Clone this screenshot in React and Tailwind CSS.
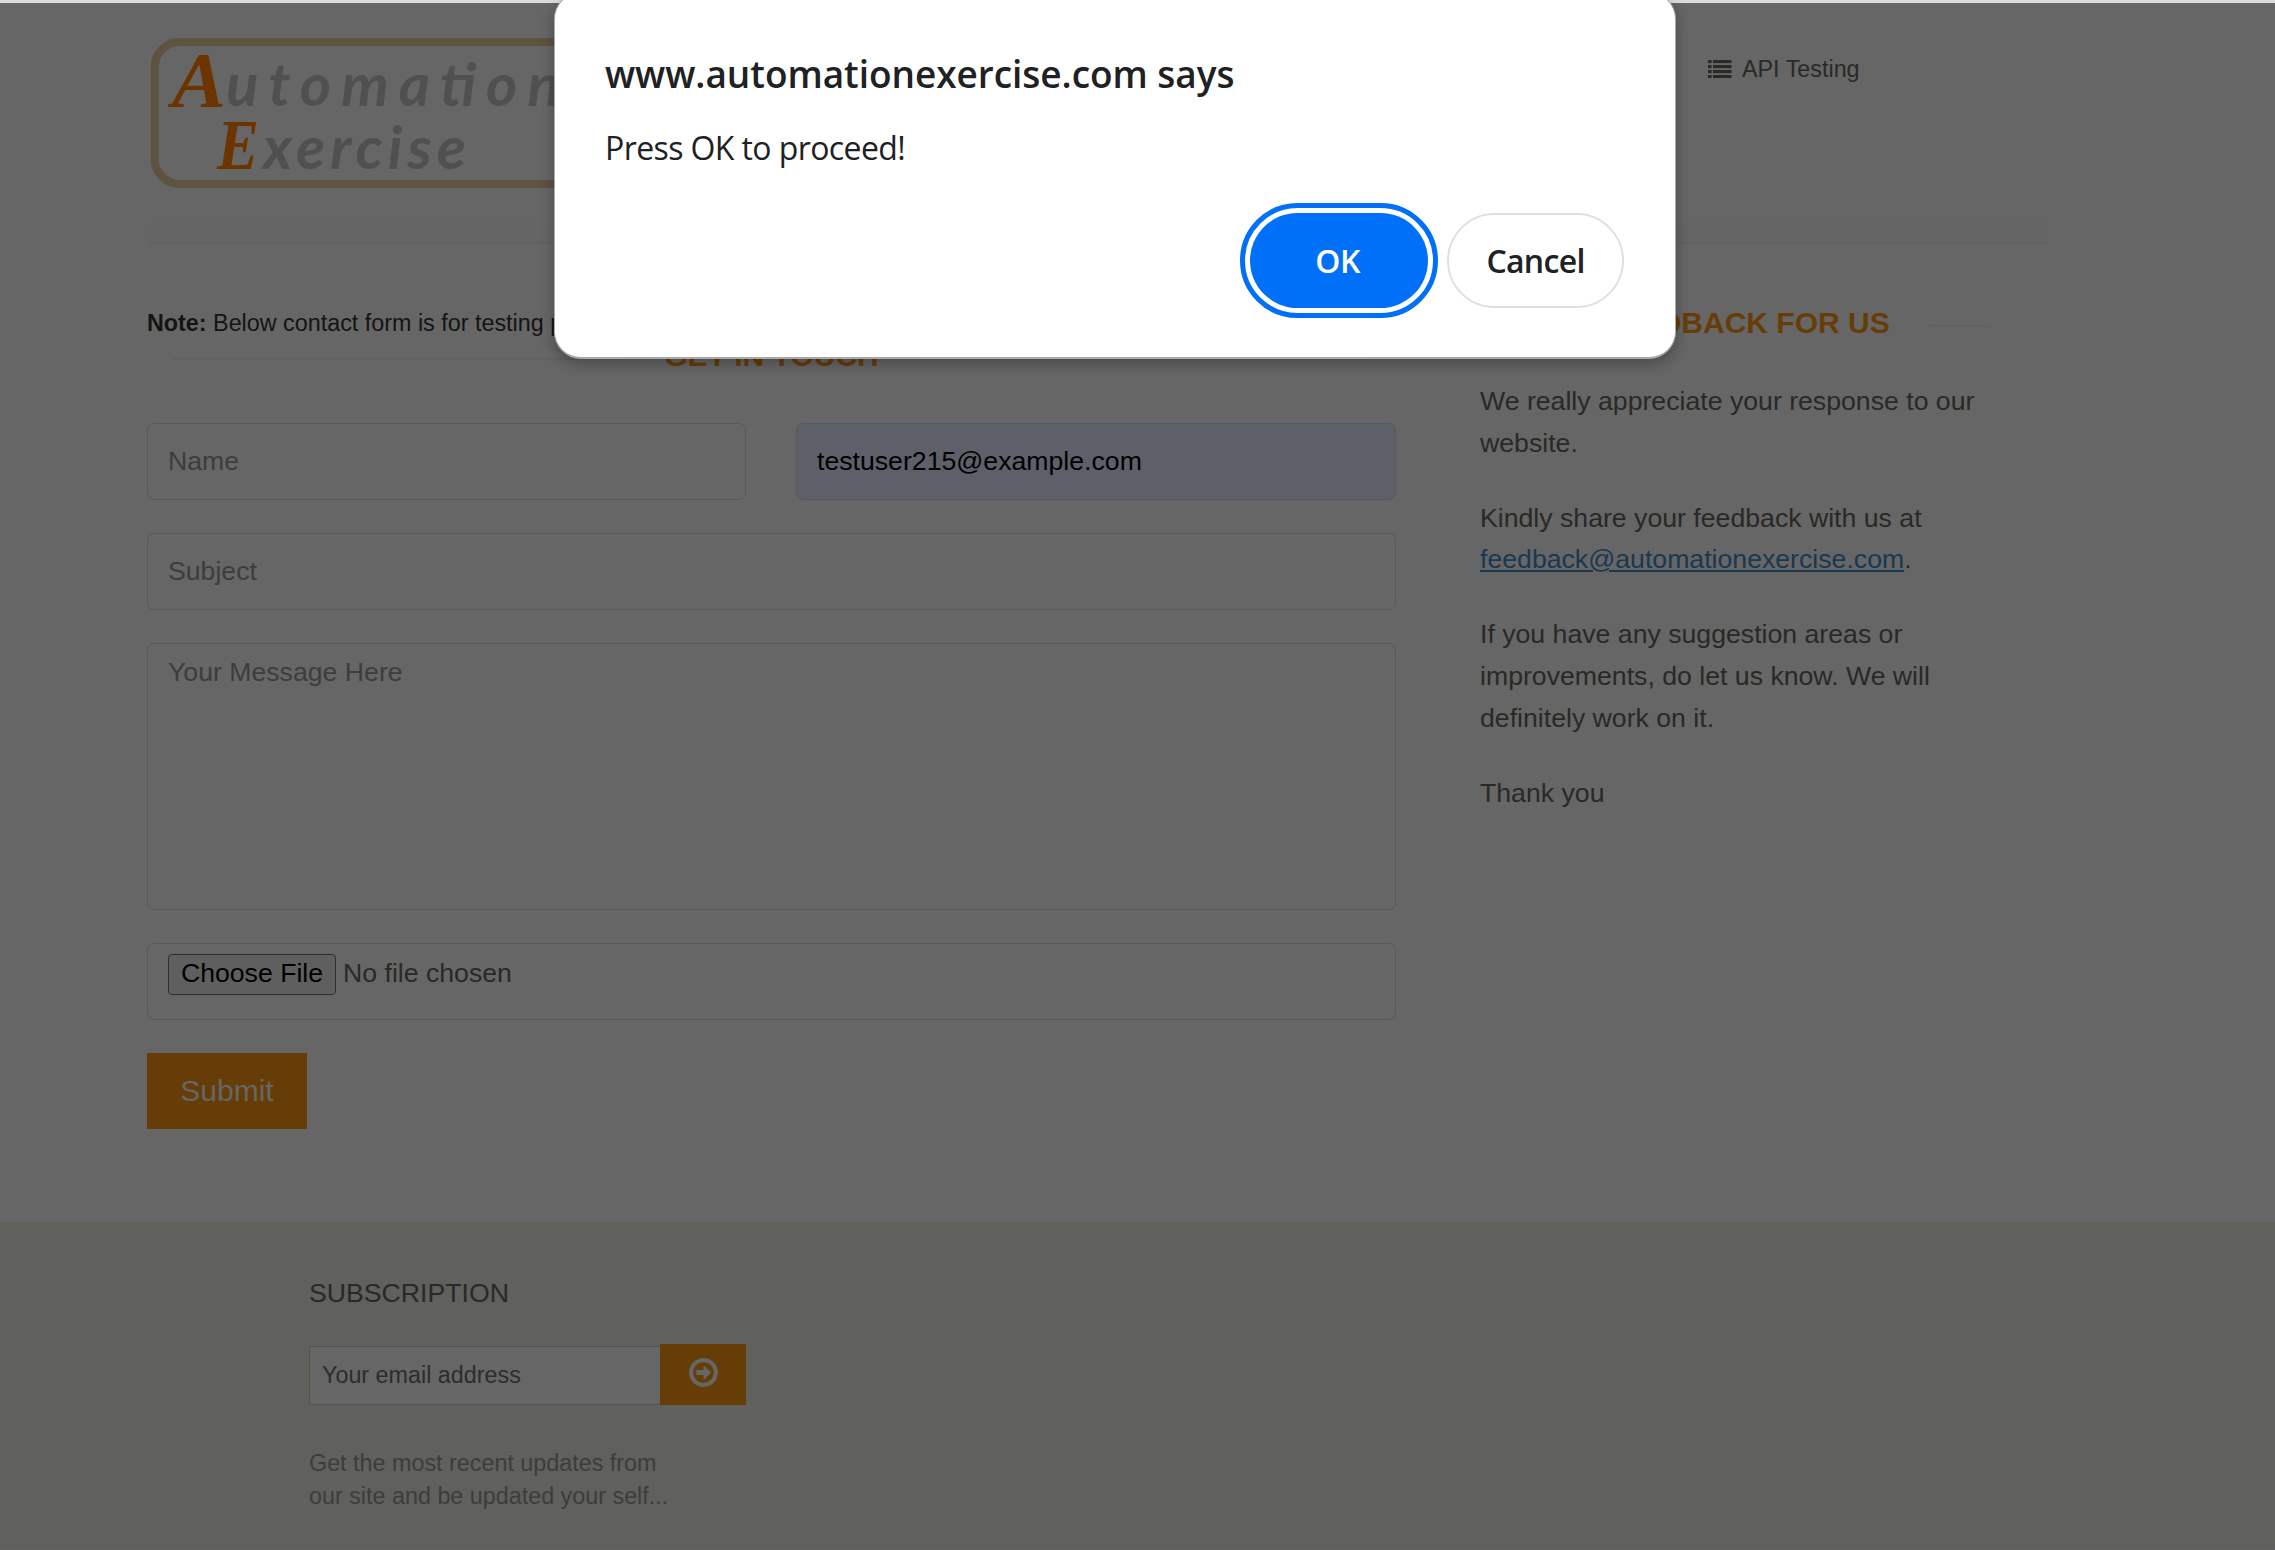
import React from "react";

const FIELD = "flex items-center border border-[#595956] rounded-[7px] px-[20px] text-[26.67px]";

function Logo() {
  return (
    <svg width="430" height="150" viewBox="151 38 430 150" className="block overflow-visible">
      <rect x="154.7" y="42" width="520" height="142" rx="25" fill="none" stroke="#5e5340" strokeWidth="8" />
      <g fontFamily="'Liberation Serif', serif" fontStyle="italic" fontWeight="700" fill="#6c3500">
        <text x="172" y="106" fontSize="78" textLength="54" lengthAdjust="spacingAndGlyphs">A</text>
        <text x="217" y="169" fontSize="72" textLength="42" lengthAdjust="spacingAndGlyphs">E</text>
      </g>
      <g fontFamily="Lato, sans-serif" fontStyle="italic" fontWeight="700" fill="#505050">
        <text x="226" y="106" fontSize="60" textLength="334" lengthAdjust="spacing">utomation</text>
        <text x="263" y="169" fontSize="60" textLength="203" lengthAdjust="spacing">xercise</text>
      </g>
    </svg>
  );
}

function ListIcon() {
  return (
    <svg width="24" height="18" viewBox="0 0 24 18" fill="#292926">
      {[0, 5, 10, 15].map((y) => (
        <g key={y}>
          <rect x="0" y={y} width="3.6" height="3.1" />
          <rect x="5" y={y} width="18.5" height="3.1" />
        </g>
      ))}
    </svg>
  );
}

function ArrowIcon() {
  return (
    <svg width="29" height="29" viewBox="0 128 1536 1536" fill="#666666">
      <path d="M1152 896q0 14-9 23l-320 320q-9 9-23 9-13 0-22.5-9.5t-9.5-22.5v-192h-352q-13 0-22.5-9.5t-9.5-22.5v-192q0-13 9.5-22.5t22.5-9.5h352v-192q0-14 9-23t23-9q12 0 24 10l319 319q9 9 9 23zm160 0q0-148-73-273t-198-198-273-73-273 73-198 198-73 273 73 273 198 198 273 73 273-73 198-198 73-273zm224 0q0 209-103 385.5t-279.5 279.5-385.5 103-385.5-103-279.5-279.5-103-385.5 103-385.5 279.5-279.5 385.5-103 385.5 103 279.5 279.5 103 385.5z" />
    </svg>
  );
}

function Header() {
  return (
    <header className="ml-[147px] w-[1901px]">
      <div className="flex h-[220px] pt-[35px]">
        <div className="ml-1 w-[1557px]">
          <Logo />
        </div>
        <a className="flex h-[33px] items-center mt-[14px] gap-[10px] text-[23.33px] text-[#292926]">
          <ListIcon />
          <span className="pt-[2px]">API Testing</span>
        </a>
      </div>
      <div className="h-[21px] border-t border-b-2 border-t-[#636363] border-b-[#626261] bg-[#656565]" />
    </header>
  );
}

function ContactForm() {
  return (
    <section className="w-[1249px]">
      <p className="mt-px -mb-px text-[23.33px] leading-[33px] text-[#141414] whitespace-nowrap">
        <b>Note:</b> Below contact form is for testing purpose.
      </p>
      <div className="flex items-center gap-[40px] px-[25px] h-[34px]">
        <span className="h-[2px] flex-1 mt-[5px] bg-[#626261]" />
        <h2 className="text-[30px] leading-[34px] font-bold text-[#663d06]">GET IN TOUCH</h2>
        <span className="h-[2px] flex-1 mt-[5px] bg-[#626261]" />
      </div>
      <form className="mt-[50px] flex flex-col gap-[33px] text-[#3d3d3d]">
        <div className="flex gap-[50px]">
          <div className={FIELD + " h-[77px] w-[599px] pb-[2px]"}>Name</div>
          <div className={FIELD + " h-[77px] w-[600px] bg-[#5d6069] pb-[2px] text-black"}>testuser215@example.com</div>
        </div>
        <div className={FIELD + " h-[77px] pb-[2px]"}>Subject</div>
        <div className={FIELD + " h-[267px] items-start pt-[9px] leading-[38px]"}>Your Message Here</div>
        <div className={FIELD + " h-[77px] items-start pt-[10px] gap-[7px] text-[#292926]"}>
          <span className="flex h-[41px] w-[168px] items-center justify-center rounded-[4px] border border-[#2f2f2f] bg-[#5f5f5f] text-black whitespace-nowrap leading-[36px] pb-[3px]">
            Choose File
          </span>
          <span className="leading-[39px]">No file chosen</span>
        </div>
        <div className="flex h-[76px] w-[160px] items-center justify-center bg-[#663d06] pb-[2px] text-[30px] text-[#666666]">
          Submit
        </div>
      </form>
    </section>
  );
}

function Feedback() {
  return (
    <section className="ml-[84px] w-[531px]">
      <div className="flex items-center justify-center gap-[40px] px-[22px] h-[34px]">
        <span className="h-[2px] flex-1 mt-[6px] bg-[#626261]" />
        <h2 className="text-[30px] leading-[34px] font-bold text-[#663d06]">FEEDBACK FOR US</h2>
        <span className="h-[2px] flex-1 mt-[6px] bg-[#626261]" />
      </div>
      <div className="mt-[41px] flex flex-col gap-[33.33px] text-[26.67px] leading-[41.67px] text-[#292926]">
        <p>We really appreciate your response to our<br />website.</p>
        <p>
          Kindly share your feedback with us at<br />
          <span className="text-[#1a3850] underline">feedback@automationexercise.com</span>.
        </p>
        <p>If you have any suggestion areas or<br />improvements, do let us know. We will<br />definitely work on it.</p>
        <p>Thank you</p>
      </div>
    </section>
  );
}

function Footer() {
  return (
    <footer className="h-[328px] bg-[#60605d] border-b border-[#675f67] pl-[309px] pt-[53px]">
      <h2 className="text-[26.67px] leading-[36px] text-[#292926]">SUBSCRIPTION</h2>
      <div className="mt-[33px] flex h-[61px] items-end">
        <div className="flex h-[59px] w-[351px] items-center border border-r-0 border-[#535350] bg-[#666666] pl-[12px] text-[23.33px] text-[#2d2d2d]">
          Your email address
        </div>
        <div className="flex h-[61px] w-[86px] items-center justify-center bg-[#663d06] pb-[5px]">
          <ArrowIcon />
        </div>
      </div>
      <p className="mt-[42px] text-[23.33px] leading-[33.33px] text-[#3d3d3c]">
        Get the most recent updates from<br />our site and be updated your self...
      </p>
    </footer>
  );
}

function AlertDialog() {
  return (
    <div className="absolute left-[554px] top-[-8px] h-[367px] w-[1122px] rounded-[27px] border border-b-2 border-[#a9a9a9] bg-white pl-[50px] pr-[51px] text-[#202122] font-['Open_Sans','Noto_Sans',sans-serif] shadow-[0_5px_14px_rgba(0,0,0,0.28)]">
      <h1 className="pt-[55px] text-[37px] leading-[52px] font-semibold whitespace-nowrap tracking-[-0.05px]">
        www.automationexercise.com says
      </h1>
      <p className="mt-[26px] text-[32px] leading-[44px] tracking-[-0.6px]">Press OK to proceed!</p>
      <div className="mt-[43px] flex justify-end gap-[19px] text-[32px] font-semibold">
        <div className="flex h-[95px] w-[178px] items-center justify-center rounded-full bg-[#0070f8] pr-[3px] text-white tracking-[-0.5px] outline-5 outline-offset-5 outline-[#0070f8]">
          OK
        </div>
        <div className="flex h-[95px] w-[177px] items-center justify-center rounded-full border-2 border-[#e0e0e0] tracking-[-0.7px]">
          Cancel
        </div>
      </div>
    </div>
  );
}

export default function App() {
  return (
    <div className="relative h-[1550px] w-[2275px] overflow-hidden bg-[#666666] font-['Liberation_Sans',Arial,sans-serif]">
      <div className="h-[3px] bg-[#dcdcdc]" />
      <Header />
      <main className="ml-[147px] flex h-[978px] pt-[62px]">
        <ContactForm />
        <Feedback />
      </main>
      <Footer />
      <AlertDialog />
    </div>
  );
}
